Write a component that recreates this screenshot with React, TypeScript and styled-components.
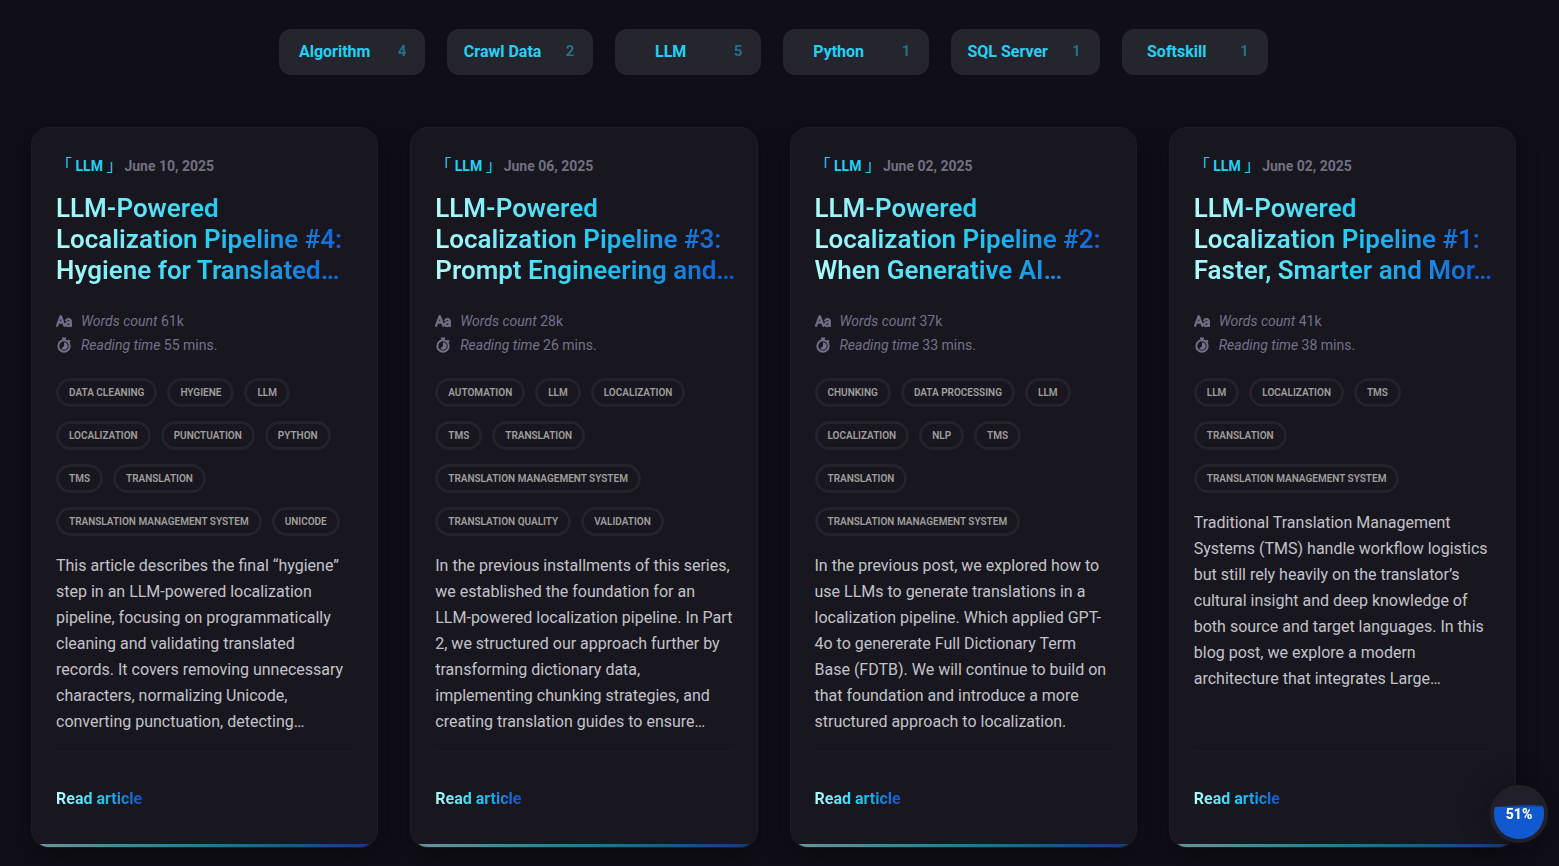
import React from 'react';
import styled, { createGlobalStyle } from 'styled-components';
import { IoText } from 'react-icons/io5';

const GRADIENT = 'linear-gradient(90deg, #b2fefa 0%, #24d0f5 50%, #0f52d0 100%)';

const GlobalStyle = createGlobalStyle`
  *, *::before, *::after { box-sizing: border-box; }
  body {
    margin: 0;
    background: #100e17;
    color: #c3c3c9;
    font-family: Roboto, "Noto Sans CJK JP", sans-serif;
    font-size: 16px;
  }
`;

const Page = styled.div`
  padding: 29px 43px 18px 31px;
`;

const CategoryNav = styled.nav`
  display: flex;
  flex-wrap: wrap;
  justify-content: center;
  gap: 22px;
  margin-bottom: 52px;
`;

const CategoryLink = styled.a`
  display: flex;
  align-items: center;
  min-width: 146px;
  height: 46px;
  padding: 0 16px 2px;
  border-radius: 12px;
  background: #24252d;
  color: #24d0f5;
  font-weight: 700;
  text-decoration: none;
`;

const CategoryName = styled.span`
  flex: 1;
  text-align: center;
`;

const CategoryCount = styled.span`
  padding: 0 3px 0 24px;
  font-size: 15px;
  opacity: 0.45;
`;

const Grid = styled.main`
  display: grid;
  grid-template-columns: repeat(4, minmax(0, 1fr));
  gap: 32px;
`;

const Card = styled.article`
  position: relative;
  display: flex;
  flex-direction: column;
  padding: 24px;
  overflow: hidden;
  border: 1px solid #1e1c26;
  border-radius: 18px;
  background: #18161f;
`;

const CardShell = styled.div`
  display: grid;
  border-radius: 18px;
  box-shadow: 0 8px 20px rgba(8, 8, 10, 0.5);
`;

const CardAccent = styled.div`
  position: absolute;
  right: 0;
  bottom: 0;
  left: 0;
  height: 3px;
  background: ${GRADIENT};
  opacity: 0.55;
`;

const Meta = styled.div`
  display: flex;
  align-items: center;
  gap: 2px;
  height: 28px;
  font-size: 14px;
  font-weight: 700;
`;

const MetaCategory = styled.a`
  color: #24d0f5;
  line-height: 28px;
  text-decoration: none;
`;

const Bracket = styled.span`
  font-family: "Noto Sans CJK JP", sans-serif;
  font-size: 16px;
  font-weight: 400;
  line-height: 1;
`;

const MetaDate = styled.time`
  color: #72707f;
`;

const Title = styled.h2`
  margin: 13px -6px 23px 0;
  background: ${GRADIENT};
  background-clip: text;
  -webkit-background-clip: text;
  color: transparent;
  font-size: 26px;
  font-weight: 600;
  line-height: 31px;
`;

const Stats = styled.ul`
  margin: 0 0 21px;
  padding: 0;
  list-style: none;
  color: #74728a;
  font-size: 14px;
  font-weight: 400;
  line-height: 24px;
`;

const Stat = styled.li`
  display: flex;
  align-items: center;
  gap: 9px;
  svg { width: 16px; height: 16px; flex: none; }
`;

const LetterIcon = styled(IoText)`
  stroke: currentColor;
  stroke-width: 28px;
`;

const Tags = styled.ul`
  display: flex;
  flex-wrap: wrap;
  gap: 14px 10px;
  margin: 0 0 17px;
  padding: 0;
  list-style: none;
`;

const Tag = styled.li`
  height: 29px;
  padding: 0 10px;
  border: 3px solid #24222d;
  border-radius: 15px;
  color: #a09f9c;
  font-size: 10px;
  font-weight: 600;
  line-height: 23px;
  text-transform: uppercase;
`;

const Excerpt = styled.p`
  margin: 0 0 16px;
  line-height: 26px;
`;

const CardFooter = styled.footer`
  margin-top: auto;
  padding: 35px 0 12px;
  border-top: 1px solid #1d1b25;
  line-height: 24px;
`;

const ReadLink = styled.a`
  display: inline-block;
  background: ${GRADIENT};
  background-clip: text;
  -webkit-background-clip: text;
  color: transparent;
  font-weight: 700;
  text-decoration: none;
`;

const ProgressButton = styled.button`
  position: fixed;
  right: 11px;
  bottom: 23px;
  display: grid;
  place-items: center;
  width: 58px;
  height: 58px;
  padding: 0;
  border: 4px solid #211f2a;
  border-radius: 50%;
  background: #211f2a;
  box-shadow: 0 0 30px rgba(8, 8, 14, 0.4);
  color: #fff;
  font: 800 14px Roboto, sans-serif;
  svg, span { grid-area: 1 / 1; }
  span { z-index: 1; }
`;

const StopwatchIcon = () => (
  <svg viewBox="0 0 16 16" fill="none" aria-hidden="true">
    <circle cx="8" cy="9" r="5.7" stroke="currentColor" strokeWidth="1.9" />
    <path d="M8 9V5.2A3.8 3.8 0 1 1 5.3 11.7Z" fill="currentColor" />
    <path d="M6 1.4h4M8 1.4v2M12.4 3.2l1.6 1.6" stroke="currentColor" strokeWidth="1.8" />
  </svg>
);

const categories: [string, number][] = [
  ['Algorithm', 4],
  ['Crawl Data', 2],
  ['LLM', 5],
  ['Python', 1],
  ['SQL Server', 1],
  ['Softskill', 1],
];

interface Post {
  date: string;
  title: string;
  words: string;
  minutes: number;
  tags: string[];
  excerpt: string;
}

const posts: Post[] = [
  {
    date: 'June 10, 2025',
    title: 'LLM-Powered Localization Pipeline #4: Hygiene for Translated…',
    words: '61k',
    minutes: 55,
    tags: ['Data Cleaning', 'Hygiene', 'LLM', 'Localization', 'Punctuation', 'Python', 'TMS', 'Translation', 'Translation Management System', 'Unicode'],
    excerpt: 'This article describes the final “hygiene” step in an LLM-powered localization pipeline, focusing on programmatically cleaning and validating translated records. It covers removing unnecessary characters, normalizing Unicode, converting punctuation, detecting…',
  },
  {
    date: 'June 06, 2025',
    title: 'LLM-Powered Localization Pipeline #3: Prompt Engineering and…',
    words: '28k',
    minutes: 26,
    tags: ['Automation', 'LLM', 'Localization', 'TMS', 'Translation', 'Translation Management System', 'Translation Quality', 'Validation'],
    excerpt: 'In the previous installments of this series, we established the foundation for an LLM-powered localization pipeline. In Part 2, we structured our approach further by transforming dictionary data, implementing chunking strategies, and creating translation guides to ensure…',
  },
  {
    date: 'June 02, 2025',
    title: 'LLM-Powered Localization Pipeline #2: When Generative AI…',
    words: '37k',
    minutes: 33,
    tags: ['Chunking', 'Data Processing', 'LLM', 'Localization', 'NLP', 'TMS', 'Translation', 'Translation Management System'],
    excerpt: 'In the previous post, we explored how to use LLMs to generate translations in a localization pipeline. Which applied GPT-4o to genererate Full Dictionary Term Base (FDTB). We will continue to build on that foundation and introduce a more structured approach to localization.',
  },
  {
    date: 'June 02, 2025',
    title: 'LLM-Powered Localization Pipeline #1: Faster, Smarter and Mor…',
    words: '41k',
    minutes: 38,
    tags: ['LLM', 'Localization', 'TMS', 'Translation', 'Translation Management System'],
    excerpt: 'Traditional Translation Management Systems (TMS) handle workflow logistics but still rely heavily on the translator’s cultural insight and deep knowledge of both source and target languages. In this blog post, we explore a modern architecture that integrates Large…',
  },
];

const PostCard = ({ post }: { post: Post }) => (
  <CardShell>
    <Card>
      <Meta>
        <MetaCategory href="#llm"><Bracket>「</Bracket> LLM <Bracket>」</Bracket></MetaCategory>
        <MetaDate>{post.date}</MetaDate>
      </Meta>
      <Title>{post.title}</Title>
      <Stats>
        <Stat>
          <LetterIcon aria-hidden="true" />
          <span><em>Words count</em> {post.words}</span>
        </Stat>
        <Stat>
          <StopwatchIcon />
          <span><em>Reading time</em> {post.minutes} mins.</span>
        </Stat>
      </Stats>
      <Tags>
        {post.tags.map((tag) => <Tag key={tag}>{tag}</Tag>)}
      </Tags>
      <Excerpt>{post.excerpt}</Excerpt>
      <CardFooter>
        <ReadLink href="#article">Read article</ReadLink>
      </CardFooter>
      <CardAccent />
    </Card>
  </CardShell>
);

export default function App() {
  return (
    <>
      <GlobalStyle />
      <Page>
        <CategoryNav aria-label="Categories">
          {categories.map(([name, count]) => (
            <CategoryLink key={name} href="#category">
              <CategoryName>{name}</CategoryName>
              <CategoryCount>{count}</CategoryCount>
            </CategoryLink>
          ))}
        </CategoryNav>
        <Grid>
          {posts.map((post) => <PostCard key={post.title} post={post} />)}
        </Grid>
      </Page>
      <ProgressButton type="button">
        <svg width="50" height="50" viewBox="0 0 50 50" aria-hidden="true">
          <path d="M1 18Q13 17 25 16T49 17A25 25 0 0 1 50 25A25 25 0 0 1 0 25Q0 21 1 18Z" fill="#103f94" />
          <path d="M1 18Q25 18 49 17.500A25 25 0 0 1 50 25A25 25 0 0 1 0 25Q0 21 1 18Z" fill="#1259d0" />
        </svg>
        <span>51%</span>
      </ProgressButton>
    </>
  );
}
